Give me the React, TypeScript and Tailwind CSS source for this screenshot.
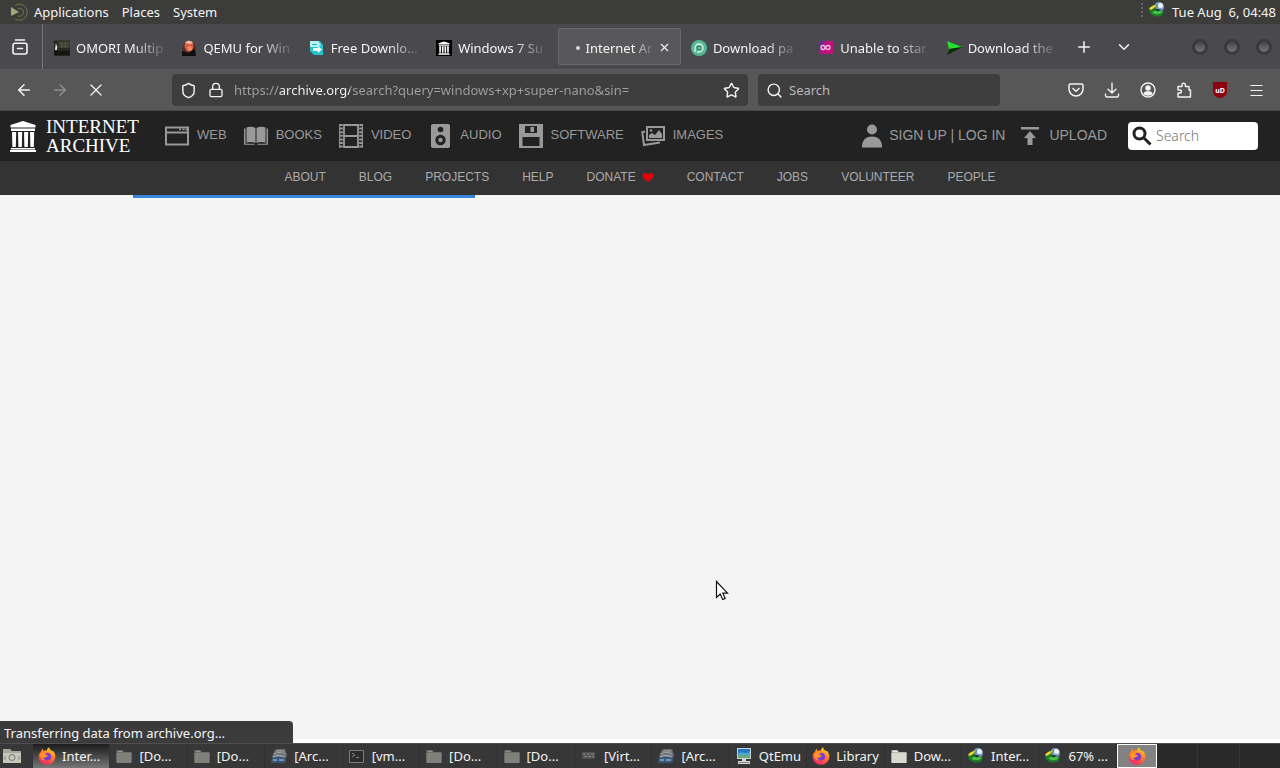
import { useState } from 'react';
import type { ReactNode } from 'react';
import { ArrowLeft, ArrowRight, ChevronDown, Lock, Menu, Plus, Search, Shield, Star, X } from 'lucide-react';

/* ---------- small app icons ---------- */

function FirefoxIcon() {
  return (
    <svg width="18" height="18" viewBox="0 0 18 18" className="shrink-0" aria-hidden="true">
      <defs>
        <linearGradient id="foxBody" x1="0.8" y1="0" x2="0.3" y2="1">
          <stop offset="0" stopColor="#ffe226" />
          <stop offset="0.45" stopColor="#ff7a2a" />
          <stop offset="1" stopColor="#f5226b" />
        </linearGradient>
      </defs>
      <path
        d="M5 1.500c-.3 1 0 1.800.6 2.500 1-.4 2.200-.5 3.200-.3C9 2 10 .9 11.300.3c-.1 1.600 1 2.300 2 3.200.4.300.7.700.9 1.100l.5-1.100C16.300 5.200 17.500 7.200 17.400 9.600A8.400 8.400 0 1 1 .6 9.200C.7 6.700 2.200 5.700 3 4.600 3.400 3.400 4.200 2.200 5 1.500z"
        fill="url(#foxBody)"
      />
      <path d="M9.200 5.800a3.900 3.900 0 1 1-3.900 4.400c1 .8 2.300.5 3.100-.4.600-.6 1.300-.5 1.600-1-.4-.6-1.300-.5-2.300-.8-.2-.9.400-1.700 1.500-2.200z" fill="#7b3bd0" />
      <path d="M2.300 6.500c1.600-1.400 3.900-1.300 5.200-.2-.8.300-1.100.9-1.200 1.700 1 .5 2.300.2 3.300.8-.5 1.100-1.700 1-2.400 1.500-.8.600-1.900.5-2.700-.1.400 1.500 1.500 2.500 3 2.900-3.200.5-5.900-2.100-5.200-6.600z" fill="#ff9a26" />
    </svg>
  );
}

function FolderIcon({ light = false }: { light?: boolean }) {
  return (
    <svg width="18" height="18" viewBox="0 0 18 18" className="shrink-0" aria-hidden="true">
      <path d="M1.500 3h6l1.500 2h7.500v10.500h-15z" fill={light ? '#b9baaf' : '#6d6e69'} />
      <path d="M1.500 6h15v10h-15z" fill={light ? '#d8d9cf' : '#80817b'} />
      <path d="M3 4.500h4" stroke={light ? '#f0f0ea' : '#8d8e88'} />
    </svg>
  );
}

function CabinetIcon() {
  return (
    <svg width="18" height="18" viewBox="0 0 18 18" className="shrink-0" aria-hidden="true">
      <path d="M5 3l2-1h8l2 6-1 3H2l1-4z" fill="#6a6e72" />
      <path d="M2 10h14v5l-2 1H1z" fill="#3d5877" />
      <path d="M6 4h8M4 7c3-2 8-2 11 0M3 10c3-2 8-2 12 0" stroke="#a4a8ad" strokeWidth="1.200" fill="none" />
      <path d="M3 13h4M9 13h5" stroke="#6f94bc" strokeWidth="2" />
    </svg>
  );
}

function TerminalIcon() {
  return (
    <svg width="18" height="18" viewBox="0 0 18 18" className="shrink-0" aria-hidden="true">
      <path d="M1.500 3.500h14v12h-14z" fill="#2b2d2d" stroke="#7c7e7b" />
      <path d="M4 6l3 2-3 2M8 10.500h3" stroke="#80827e" fill="none" />
    </svg>
  );
}

function MachineIcon() {
  return (
    <svg width="18" height="18" viewBox="0 0 18 18" className="shrink-0" aria-hidden="true">
      <path d="M2 5h13v7H2z" fill="#4f5050" />
      <path d="M3 7h11M4 9.500h10" stroke="#868888" strokeDasharray="3 1" />
    </svg>
  );
}

function DisplayIcon() {
  return (
    <svg width="18" height="18" viewBox="0 0 18 18" className="shrink-0" aria-hidden="true">
      <path d="M2 1h14v11H2z" fill="#c4d6dd" />
      <path d="M3 2h12v9H3z" fill="#2579c3" />
      <path d="M3 7c4-4 8 2 12-3v7H3z" fill="#53a7cf" />
      <path d="M3 9c4-2 8 1 12-1v3H3z" fill="#6ca86a" />
      <path d="M7 12h4v2h4v3H3v-3h4z" fill="#d0d3d1" />
      <path d="M4 15.500h10" stroke="#858b8b" />
    </svg>
  );
}

function DownloadManagerIcon() {
  return (
    <svg width="18" height="18" viewBox="0 0 18 18" className="shrink-0" aria-hidden="true">
      <circle cx="11" cy="6" r="5" fill="#7d9fc8" />
      <circle cx="12.500" cy="4.500" r="2.500" fill="#eef4fa" />
      <path d="M1 9c1-4 5-6 9-5L7 7l3 3 6 .5-2 4C10 17 1 15 1 9z" fill="#1b7a2a" />
      <path d="M1 8c2-3 5-4.500 8-4L6 7 3 9z" fill="#f0d238" />
      <path d="M4 11c3 3 7 3 11 0l-5-2z" fill="#4cc447" />
      <path d="M7 7.500l7 1.500-5 1.500z" fill="#123d1a" />
    </svg>
  );
}

/* ---------- tab favicons ---------- */

function Temple({ className }: { className: string }) {
  return (
    <svg viewBox="0 0 28 32" className={className} fill="currentColor" aria-hidden="true">
      <path d="M14 1L26.500 5v2.500h-25V5zM2 8.500h24V11H2zM3 12h4.200l-.4 15H3.400zM9 12h4.200l-.4 15H9.400zM15 12h4.200l-.4 15h-3.400zM21 12h4.200l-.4 15h-3.400zM2 28h24v1.500H2zM1 30h26v2H1z" />
    </svg>
  );
}

const OmoriIcon = (
  <svg width="17" height="16" viewBox="0 0 17 16" aria-hidden="true">
    <path d="M0 0h17v16H0z" fill="#272a1e" />
    <path d="M4 1h13v7H5z" fill="#3b3e2c" />
    <path d="M6 3h10M7 6h8M8 1v7M12 1v7" stroke="#5a5c43" strokeWidth=".8" />
    <path d="M2 3l1.500 4L3 10H1z" fill="#e4e6df" />
    <path d="M0 11h17v5H0z" fill="#17160e" />
  </svg>
);

const QemuIcon = (
  <svg width="16" height="16" viewBox="0 0 16 16" aria-hidden="true">
    <path d="M2 14c-1-5 0-13 6-13 6 0 7 6 6 12z" fill="#4a2c26" />
    <ellipse cx="8" cy="6" rx="4.500" ry="5.500" fill="#d8603f" />
    <path d="M4 3c2-3 6-3 8 0L9 4z" fill="#f1b9a7" />
    <path d="M6 7l4-1 1 4-3 1z" fill="#f48e68" />
    <path d="M1 11l6 2 7-4 1 7H1z" fill="#120e0e" />
  </svg>
);

const FreeIcon = (
  <svg width="16" height="16" viewBox="0 0 16 16" aria-hidden="true">
    <path d="M1 2l2-1h8l3 4v10H5l-4-4z" fill="#22c3cc" />
    <path d="M1 1h8l3 4-3 2H1z" fill="#b9f1f2" />
    <path d="M3 4h5v1H3z" fill="#22b6c4" />
    <path d="M4 8h5V6l4 3.500-4 3.500v-2H4z" fill="#f4ffff" />
  </svg>
);

const ArchiveIcon = (
  <span className="flex size-4 items-center justify-center bg-black text-white">
    <Temple className="size-3.5" />
  </span>
);

const PIcon = (
  <svg width="16" height="16" viewBox="0 0 16 16" aria-hidden="true">
    <circle cx="8" cy="8" r="8" fill="#54b894" />
    <path d="M4 12V8a4 4 0 1 1 4 4H6" fill="none" stroke="#e2f4ec" strokeWidth="1.300" />
    <circle cx="8" cy="8" r="2.200" fill="#2d7f67" />
    <path d="M7 8h2.500" stroke="#e2f4ec" />
  </svg>
);

const LoopIcon = (
  <svg width="16" height="16" viewBox="0 0 16 16" aria-hidden="true">
    <path d="M1 1h14v13H1z" fill="#c0127e" />
    <path d="M1 1h6L1 14z" fill="#6b2aa0" />
    <circle cx="5" cy="7.500" r="2" fill="none" stroke="#f0c4e4" strokeWidth="1.300" />
    <path d="M8 9.500V7.500a2 2 0 1 1 2 2c-1 0-1.500-.7-2-1.500" fill="none" stroke="#f0c4e4" strokeWidth="1.300" />
  </svg>
);

const ArrowIcon = (
  <svg width="16" height="16" viewBox="0 0 16 16" aria-hidden="true">
    <path d="M1 1l15 6L1 15l2-7z" fill="#0c5d12" />
    <path d="M1 1l15 6-13 2z" fill="#22e02c" />
    <path d="M1 15l3-6 12-2z" fill="#082a0a" />
  </svg>
);

const tabs: { title: string; icon?: ReactNode; active?: boolean }[] = [
  { title: 'OMORI Multip', icon: OmoriIcon },
  { title: 'QEMU for Win', icon: QemuIcon },
  { title: 'Free Downlo…', icon: FreeIcon },
  { title: 'Windows 7 Su', icon: ArchiveIcon },
  { title: 'Internet Ar', active: true },
  { title: 'Download pa', icon: PIcon },
  { title: 'Unable to star', icon: LoopIcon },
  { title: 'Download the', icon: ArrowIcon },
];

/* ---------- archive.org media icons ---------- */

const WebIcon = (
  <svg width="24" height="24" viewBox="0 0 24 24" aria-hidden="true">
    <path d="M1 3.500h22v17H1zM1 8.500h22" fill="none" stroke="currentColor" strokeWidth="2" />
    <path d="M14 5.500h2M17.500 5.500h2M20.500 5.500h1.500" stroke="currentColor" strokeWidth="1.500" />
  </svg>
);

const BooksIcon = (
  <svg width="24" height="24" viewBox="0 0 24 24" fill="currentColor" aria-hidden="true">
    <path d="M2.500 3.500c3-1 6.500-.8 9 .5v15c-2.500-1.200-6-1.300-9-.3zM12.500 4c2.500-1.300 6-1.500 9-.5v15.200c-3-1-6.500-.9-9 .3zM0 4.500h1.500v15.300h8.500l1 1H0zM22.500 4.500H24v16.300H13l1-1h8.500z" />
  </svg>
);

const VideoIcon = (
  <svg width="24" height="24" viewBox="0 0 24 24" aria-hidden="true">
    <path d="M5 1h14v22H5zM5 12h14" fill="none" stroke="currentColor" strokeWidth="1.800" />
    <path d="M2 0v24M22 0v24" stroke="currentColor" strokeWidth="3.500" strokeDasharray="2 1.600" />
    <path d="M.6 0v24M23.400 0v24" stroke="currentColor" />
  </svg>
);

const AudioIcon = (
  <svg width="24" height="24" viewBox="0 0 24 24" aria-hidden="true">
    <rect x="3" y="0" width="19" height="24" rx="2" fill="currentColor" />
    <circle cx="12.500" cy="5.500" r="2.800" fill="#222" />
    <circle cx="12.500" cy="16" r="5.200" fill="#222" />
    <circle cx="12.500" cy="16" r="2.200" fill="currentColor" />
  </svg>
);

const SoftwareIcon = (
  <svg width="24" height="24" viewBox="0 0 24 24" aria-hidden="true">
    <path d="M0 0h24v24H0z" fill="currentColor" />
    <path d="M6 2h12v7H6zM3.500 13h17v9h-17z" fill="#222" />
    <path d="M11.500 3h3.500v5h-3.500z" fill="currentColor" />
  </svg>
);

const ImagesIcon = (
  <svg width="24" height="24" viewBox="0 0 24 24" aria-hidden="true">
    <path d="M6 3h17v13H6z" fill="none" stroke="currentColor" strokeWidth="2" />
    <path d="M8 14v-3l3-2 3 2 4-5 3 4v4z" fill="currentColor" />
    <circle cx="10" cy="6.500" r="1.300" fill="currentColor" />
    <path d="M4 7.500L1.300 8.300 3 21l16-2.500" fill="none" stroke="currentColor" strokeWidth="2" />
  </svg>
);

const media = [
  { label: 'WEB', icon: WebIcon },
  { label: 'BOOKS', icon: BooksIcon },
  { label: 'VIDEO', icon: VideoIcon },
  { label: 'AUDIO', icon: AudioIcon },
  { label: 'SOFTWARE', icon: SoftwareIcon },
  { label: 'IMAGES', icon: ImagesIcon },
];

const infoLinks = ['ABOUT', 'BLOG', 'PROJECTS', 'HELP', 'DONATE', 'CONTACT', 'JOBS', 'VOLUNTEER', 'PEOPLE'];

const tasks: { label: string; icon: ReactNode; active?: boolean }[] = [
  { label: 'Inter...', icon: <FirefoxIcon />, active: true },
  { label: '[Do...', icon: <FolderIcon /> },
  { label: '[Do...', icon: <FolderIcon /> },
  { label: '[Arc...', icon: <CabinetIcon /> },
  { label: '[vm...', icon: <TerminalIcon /> },
  { label: '[Do...', icon: <FolderIcon /> },
  { label: '[Do...', icon: <FolderIcon /> },
  { label: '[Virt...', icon: <MachineIcon /> },
  { label: '[Arc...', icon: <CabinetIcon /> },
  { label: 'QtEmu', icon: <DisplayIcon /> },
  { label: 'Library', icon: <FirefoxIcon /> },
  { label: 'Dow...', icon: <FolderIcon light /> },
  { label: 'Inter...', icon: <DownloadManagerIcon /> },
  { label: '67% ...', icon: <DownloadManagerIcon /> },
];

/* ---------- sections ---------- */

function DesktopPanel() {
  return (
    <header className="flex h-6 items-center justify-between bg-[#3c3c3b] pl-2.5 pr-1">
      <nav className="flex items-center gap-[13px]">
        <button className="flex items-center gap-1.5">
          <svg width="18" height="18" viewBox="0 0 18 18" aria-hidden="true">
            <path d="M1 4l8 5-8 4z" fill="#a3a878" />
            <path d="M5 2.500A8 8 0 1 1 5 16" fill="none" stroke="#6b7a4b" />
            <path d="M8 5.500a4 4 0 1 1 0 7.500" fill="none" stroke="#6b7a4b" />
          </svg>
          Applications
        </button>
        <button>Places</button>
        <button>System</button>
      </nav>
      <div className="flex items-center gap-1.5">
        <span className="flex items-center gap-1 pb-1">
          <svg width="4" height="16" viewBox="0 0 4 16" aria-hidden="true">
            <path d="M2 1v14" stroke="#636363" strokeWidth="2" strokeDasharray="2 2" />
          </svg>
          <DownloadManagerIcon />
        </span>
        <time className="whitespace-pre">Tue Aug  6, 04:48</time>
      </div>
    </header>
  );
}

function TabStrip() {
  return (
    <div className="flex h-[45px] bg-[#4a494d]">
      <button className="flex w-[43px] shrink-0 items-center justify-center border-r border-[#77767a] pr-0.5" aria-label="View recent browsing">
        <svg width="16" height="16" viewBox="0 0 16 16" fill="none" stroke="#f4f4f4" strokeWidth="1.600" strokeLinecap="round" aria-hidden="true">
          <path d="M3.500 1h9M3 4.200h10a2 2 0 0 1 2 2V13a2 2 0 0 1-2 2H3a2 2 0 0 1-2-2V6.200a2 2 0 0 1 2-2zM5.500 9.500h5" />
        </svg>
      </button>
      <div className="flex min-w-0 flex-1" role="tablist">
        {tabs.map((tab) => (
          <div key={tab.title} className="min-w-0 flex-1 basis-0 py-1">
            <button
              role="tab"
              aria-selected={!!tab.active}
              className={`flex h-full items-center gap-1.5 border pt-0.5 text-left ${
                tab.active ? 'ml-[5px] w-[123px] rounded-xs border-[#69686b] bg-[#58585a] pl-[5px]' : 'w-full border-transparent pl-2.5'
              }`}
            >
              <span className="flex w-4 shrink-0 justify-center">
                {tab.icon ?? <span className="ml-3 size-1 rounded-full bg-[#d5d5d5]" />}
              </span>
              <span
                className={`whitespace-nowrap ${
                  tab.active
                    ? '[mask-image:linear-gradient(90deg,#000_70%,#0003_98%)]'
                    : '[mask-image:linear-gradient(90deg,#000_65%,#0003_98%)]'
                }`}
              >
                {tab.title}
              </span>
              {tab.active && <X size={13} className="shrink-0" strokeWidth={2} />}
            </button>
          </div>
        ))}
      </div>
      <div className="flex w-[218px] shrink-0 items-center">
        <button className="flex w-11 justify-center" aria-label="New tab">
          <Plus size={18} />
        </button>
        <button className="flex w-9 justify-center" aria-label="List all tabs">
          <ChevronDown size={18} />
        </button>
        <div className="ml-auto flex">
          {['Minimize', 'Maximize', 'Close'].map((name) => (
            <button key={name} aria-label={name} className="flex w-8 justify-center">
              <span className="size-4 rounded-full border-3 border-[#39383b] bg-linear-to-b from-[#47464a] to-[#77767a]" />
            </button>
          ))}
        </div>
      </div>
    </div>
  );
}

function ToolbarButton({ name, children }: { name: string; children: ReactNode }) {
  return (
    <button aria-label={name} title={name} className="flex h-8 w-9 shrink-0 items-center justify-center">
      {children}
    </button>
  );
}

function Toolbar() {
  const [url, setUrl] = useState('https://archive.org/search?query=windows+xp+super-nano&sin=');

  return (
    <div className="flex h-[42px] items-center border-y border-t-[#5e5e5e] border-b-[#484848] bg-[#575757] px-1.5">
      <div className="flex w-[166px] shrink-0">
        <ToolbarButton name="Back"><ArrowLeft size={18} /></ToolbarButton>
        <ToolbarButton name="Forward"><ArrowRight size={18} className="text-[#8e8e8e]" /></ToolbarButton>
        <ToolbarButton name="Stop"><X size={20} strokeWidth={1.5} /></ToolbarButton>
      </div>
      <div className="flex h-8 min-w-0 flex-1 items-center rounded bg-[#3e3e3e] px-2">
        <Shield size={17} strokeWidth={2} className="shrink-0" />
        <Lock size={16} strokeWidth={2} className="ml-[11px] shrink-0" />
        <input
          aria-label="Address"
          value={url}
          onChange={(e) => setUrl(e.target.value)}
          className="ml-2.5 min-w-0 flex-1 bg-[linear-gradient(90deg,#a0a0a0_45px,#f8f8f8_45px,#f8f8f8_116px,#a0a0a0_116px)] bg-clip-text text-transparent outline-none"
        />
        <Star size={17} strokeWidth={2} className="shrink-0" />
      </div>
      <label className="ml-2.5 flex h-8 w-[242px] shrink-0 items-center gap-1.5 rounded bg-[#3e3e3e] px-2">
        <Search size={17} strokeWidth={2} />
        <input placeholder="Search" aria-label="Search the web" className="min-w-0 flex-1 outline-none placeholder:text-[#b9b9b9]" />
      </label>
      <div className="ml-[58px] flex shrink-0">
        <ToolbarButton name="Save to Pocket">
          <svg width="16" height="16" viewBox="0 0 16 16" fill="none" stroke="currentColor" strokeWidth="1.500" strokeLinecap="round" strokeLinejoin="round" aria-hidden="true">
            <path d="M2.500 2h11A1.500 1.500 0 0 1 15 3.500V7A7 7 0 0 1 1 7V3.500A1.500 1.500 0 0 1 2.500 2zM5 6.500L8 9.300l3-2.800" />
          </svg>
        </ToolbarButton>
        <ToolbarButton name="Downloads">
          <svg width="16" height="16" viewBox="0 0 16 16" fill="none" stroke="currentColor" strokeWidth="1.400" strokeLinecap="round" strokeLinejoin="round" aria-hidden="true">
            <path d="M8 1v10M4 7.200L8 11l4-3.800M1.500 12v1.500A1.500 1.500 0 0 0 3 15h10a1.500 1.500 0 0 0 1.500-1.500V12" />
          </svg>
        </ToolbarButton>
        <ToolbarButton name="Account">
          <svg width="16" height="16" viewBox="0 0 16 16" aria-hidden="true">
            <circle cx="8" cy="8" r="7" fill="none" stroke="currentColor" strokeWidth="1.400" />
            <circle cx="8" cy="6" r="2.700" fill="currentColor" />
            <path d="M3.500 12c.3-2 1.500-2.800 3-2.800h3c1.500 0 2.700.8 3 2.800-2 2.200-7 2.200-9 0z" fill="currentColor" />
          </svg>
        </ToolbarButton>
        <ToolbarButton name="Extensions">
          <svg width="16" height="16" viewBox="0 0 16 16" fill="none" stroke="currentColor" strokeWidth="1.400" strokeLinejoin="round" aria-hidden="true">
            <path d="M2 15V11h2a1.500 1.500 0 0 0 0-3H2V4.500h4V3a1.700 1.700 0 0 1 3.400 0v1.500H13V8h1.500v7z" />
          </svg>
        </ToolbarButton>
        <ToolbarButton name="uBlock Origin">
          <span className="flex h-4 w-3.5 items-center justify-center rounded-b-full rounded-t-sm bg-[#8c0010] text-[7px] font-bold leading-none text-white">
            uD
          </span>
        </ToolbarButton>
        <ToolbarButton name="Menu"><Menu size={17} strokeWidth={1.5} /></ToolbarButton>
      </div>
    </div>
  );
}

function ArchiveHeader() {
  return (
    <header className="font-['Liberation_Sans',Arial,sans-serif] text-[#999]">
      <div className="flex h-[50px] items-center bg-[#222] pl-2 pr-[22px]">
        <a href="#home" className="flex items-center gap-2 text-white">
          <Temple className="h-8 w-[30px]" />
          <span className="w-[97px] font-['Liberation_Serif',serif] text-[19px] leading-[19px]">
            INTERNET
            <br />
            ARCHIVE
          </span>
        </a>
        <nav className="ml-[22px] flex gap-[17px] text-[13px]">
          {media.map((m) => (
            <a key={m.label} href={`#${m.label.toLowerCase()}`} className="flex items-center gap-2">
              {m.icon}
              <span className="pb-0.5">{m.label}</span>
            </a>
          ))}
        </nav>
        <div className="ml-auto flex items-center text-sm">
          <div className="flex items-center gap-1.5">
            <svg width="22" height="24" viewBox="0 0 22 24" fill="currentColor" aria-hidden="true">
              <circle cx="11" cy="5.500" r="5" />
              <path d="M1 23.500c0-7 3-11 10-11s10 4 10 11z" />
            </svg>
            <span className="whitespace-pre pb-0.5">
              <a href="#signup">SIGN UP</a> | <a href="#login">LOG IN</a>
            </span>
          </div>
          <a href="#upload" className="ml-3.5 flex items-center gap-2">
            <svg width="22" height="20" viewBox="0 0 22 20" fill="currentColor" aria-hidden="true">
              <path d="M2 1h18v2.500H2zM11 5l6 7h-3.500v7h-5v-7H5z" />
            </svg>
            <span className="pb-0.5">UPLOAD</span>
          </a>
          <label className="ml-[21px] flex h-7 w-[130px] items-center gap-1 rounded bg-white px-1 text-[#222]">
            <svg width="20" height="20" viewBox="0 0 20 20" fill="none" stroke="currentColor" strokeWidth="3" aria-hidden="true">
              <circle cx="7.500" cy="7.500" r="5.500" />
              <path d="M11.500 11.500l7 7" />
            </svg>
            <input
              placeholder="Search"
              aria-label="Search archive"
              className="min-w-0 flex-1 font-['Noto_Sans',sans-serif] text-sm font-light outline-none placeholder:text-[#777]"
            />
          </label>
        </div>
      </div>
      <nav className="flex h-[34px] items-center justify-center gap-[33px] bg-[#333] pb-0.5 text-xs text-[#aaa]">
        {infoLinks.map((name) => (
          <a key={name} href={`#${name.toLowerCase()}`} className="flex items-center gap-1.5">
            {name}
            {name === 'DONATE' && (
              <svg width="12" height="10" viewBox="0 0 12 10" fill="#e8000b" aria-hidden="true">
                <path d="M6 10L1.500 6C-.5 3.500 1 1 3 1c1.300 0 2.300.6 3 1.500C6.700 1.600 7.700 1 9 1c2 0 3.500 2.500 1.500 5z" />
              </svg>
            )}
          </a>
        ))}
      </nav>
    </header>
  );
}

function Taskbar() {
  return (
    <footer className="flex h-[25px] border-t border-[#4f4f4f] bg-[#373737]">
      <button aria-label="Show desktop" className="flex w-[33px] shrink-0 items-center pl-0.5">
        <svg width="20" height="18" viewBox="0 0 20 18" aria-hidden="true">
          <path d="M1 2h7l2 2h9v12H1z" fill="#a6a89b" />
          <path d="M1 6h18v10H1z" fill="#c6c8bc" />
          <circle cx="10" cy="10.500" r="3" fill="none" stroke="#77796e" />
          <path d="M3 9v4M17 9v4" stroke="#8b8d82" />
        </svg>
      </button>
      <div className="flex min-w-0 flex-1">
        {tasks.map((task, i) => (
          <button
            key={i}
            className={`flex min-w-0 flex-1 items-center gap-1.5 border-r pl-[5px] text-left ${
              task.active ? 'border-[#333] bg-linear-to-b from-[#1d1d1d] to-[#777]' : 'border-[#2f2f2f]'
            }`}
          >
            {task.icon}
            <span className="whitespace-nowrap">{task.label}</span>
          </button>
        ))}
      </div>
      <div className="flex w-[163px] shrink-0 bg-[#292929]">
        <button aria-label="Workspace 1" className="flex w-10 items-center justify-center border border-white bg-[#828282]">
          <FirefoxIcon />
        </button>
        <button aria-label="Workspace 2" className="flex-1 border-r border-[#363636]" />
        <button aria-label="Workspace 3" className="flex-1 border-r border-[#363636]" />
        <button aria-label="Workspace 4" className="flex-1" />
      </div>
    </footer>
  );
}

export default function App() {
  return (
    <div className="flex min-h-screen flex-col bg-[#f4f4f4] font-['Noto_Sans',sans-serif] text-[13px] leading-5 text-[#f4f4f4]">
      <DesktopPanel />
      <TabStrip />
      <Toolbar />
      <ArchiveHeader />
      <main className="relative flex flex-1 flex-col">
        {/* page loading progress */}
        <div className="ml-[133px] h-[3px] w-[342px] bg-[#3585dc]" />
        <svg width="14" height="21" viewBox="0 0 14 21" className="absolute left-[715px] top-[385px]" aria-hidden="true">
          <path d="M1.500 1.500v16l3.700-3.400 2.500 5.400 2.500-1.100-2.400-5.200h4.700z" fill="#fff" stroke="#111" strokeWidth="1.200" />
        </svg>
        <div className="mt-auto h-1 bg-white" />
        <div role="status" className="absolute bottom-0 left-0 w-[293px] rounded-tr bg-[#3b3b3b] px-1 pt-0.5">
          Transferring data from archive.org…
        </div>
      </main>
      <Taskbar />
    </div>
  );
}
